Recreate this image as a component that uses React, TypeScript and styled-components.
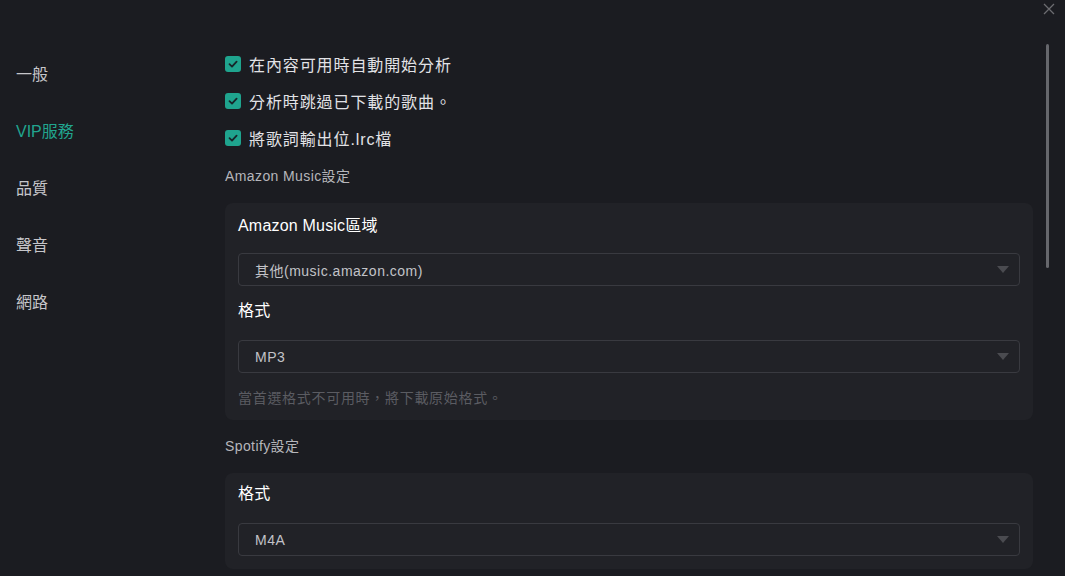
import styled, { createGlobalStyle } from "styled-components";

const GlobalStyle = createGlobalStyle`
  html, body {
    margin: 0;
    padding: 0;
    background: #1b1c21;
  }
  body {
    font-family: "Liberation Sans", "Noto Sans CJK TC", sans-serif;
  }
`;

const Window = styled.div`
  position: relative;
  width: 1065px;
  height: 576px;
  display: flex;
  overflow: hidden;
  background: #1b1c21;
`;

const Sidebar = styled.nav`
  width: 225px;
  flex-shrink: 0;
  padding: 46px 0 0 16px;
  box-sizing: border-box;
  display: flex;
  flex-direction: column;
`;

const NavItem = styled.div<{ $active?: boolean }>`
  height: 57px;
  line-height: 57px;
  font-size: 16px;
  color: ${(p) => (p.$active ? "#21a58f" : "#c6c6ca")};
  cursor: pointer;
`;

const Content = styled.main`
  flex: 1;
  padding: 45px 32px 0 0;
  box-sizing: border-box;
  display: flex;
  flex-direction: column;
`;

const CheckRow = styled.label`
  height: 37px;
  display: flex;
  align-items: center;
  gap: 8px;
  font-size: 16px;
  letter-spacing: 0.9px;
  color: #e2e2e6;
`;

const Box = styled.span`
  width: 16px;
  height: 16px;
  border-radius: 3px;
  background: #1fa48e;
  display: flex;
  align-items: center;
  justify-content: center;
`;

const SectionTitle = styled.div<{ $top: number }>`
  margin-top: ${(p) => p.$top}px;
  line-height: 20px;
  font-size: 14px;
  letter-spacing: 0.4px;
  color: #b6b6bb;
`;

const Card = styled.section<{ $padTop: number; $padBottom: number }>`
  margin-top: 17px;
  background: #212227;
  border-radius: 8px;
  padding: ${(p) => p.$padTop}px 13px ${(p) => p.$padBottom}px;
  display: flex;
  flex-direction: column;
`;

const FieldLabel = styled.div<{ $top?: number }>`
  margin-top: ${(p) => p.$top ?? 0}px;
  line-height: 24px;
  font-size: 16px;
  letter-spacing: 0.2px;
  color: #ffffff;
`;

const Select = styled.div<{ $top: number }>`
  margin-top: ${(p) => p.$top}px;
  height: 33px;
  box-sizing: border-box;
  border: 1px solid #393a40;
  border-radius: 4px;
  padding: 0 10px 0 16px;
  display: flex;
  align-items: center;
  justify-content: space-between;
  font-size: 14px;
  letter-spacing: 0.5px;
  color: #c2c2c8;
`;

const Arrow = styled.span`
  width: 0;
  height: 0;
  border-left: 6px solid transparent;
  border-right: 6px solid transparent;
  border-top: 7px solid #4a4b50;
`;

const Hint = styled.div`
  margin-top: 16px;
  line-height: 18px;
  font-size: 14px;
  letter-spacing: 0.7px;
  color: #5b5c62;
`;

const CloseButton = styled.button`
  position: absolute;
  top: 2px;
  right: 9px;
  width: 14px;
  height: 14px;
  padding: 0;
  border: none;
  background: transparent;
  cursor: pointer;
`;

const ScrollThumb = styled.div`
  position: absolute;
  left: 1046px;
  top: 44px;
  width: 3px;
  height: 224px;
  border-radius: 2px;
  background: #66676c;
`;

const Check = () => (
  <Box>
    <svg width="12" height="12" viewBox="0 0 12 12">
      <path d="M2.5 6.2 L5 8.6 L9.6 3.6" fill="none" stroke="#17262a" strokeWidth="1.8" strokeLinecap="round" strokeLinejoin="round" />
    </svg>
  </Box>
);

const nav = ["一般", "VIP服務", "品質", "聲音", "網路"];
const checks = ["在內容可用時自動開始分析", "分析時跳過已下載的歌曲。", "將歌詞輸出位.lrc檔"];

export default function App() {
  return (
    <>
      <GlobalStyle />
      <Window>
        <Sidebar>
          {nav.map((n) => (
            <NavItem key={n} $active={n === "VIP服務"}>
              {n}
            </NavItem>
          ))}
        </Sidebar>
        <Content>
          {checks.map((c) => (
            <CheckRow key={c}>
              <Check />
              {c}
            </CheckRow>
          ))}
          <SectionTitle $top={10}>Amazon Music設定</SectionTitle>
          <Card $padTop={11} $padBottom={13}>
            <FieldLabel>Amazon Music區域</FieldLabel>
            <Select $top={15}>
              其他(music.amazon.com)
              <Arrow />
            </Select>
            <FieldLabel $top={13}>格式</FieldLabel>
            <Select $top={17}>
              MP3
              <Arrow />
            </Select>
            <Hint>當首選格式不可用時，將下載原始格式。</Hint>
          </Card>
          <SectionTitle $top={16}>Spotify設定</SectionTitle>
          <Card $padTop={9} $padBottom={13}>
            <FieldLabel>格式</FieldLabel>
            <Select $top={17}>
              M4A
              <Arrow />
            </Select>
          </Card>
        </Content>
        <CloseButton aria-label="close">
          <svg width="14" height="14" viewBox="0 0 14 14">
            <path d="M2 2 L12 12 M12 2 L2 12" stroke="#6c6c70" strokeWidth="1.3" />
          </svg>
        </CloseButton>
        <ScrollThumb />
      </Window>
    </>
  );
}
